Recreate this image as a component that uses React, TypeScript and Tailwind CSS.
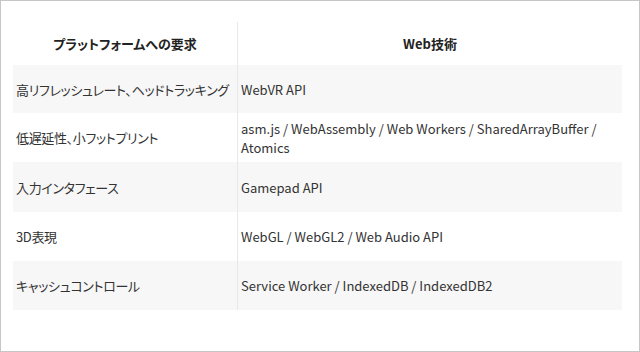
import React from "react";

const rows: { a: string; b: string; shaded: boolean; h: string }[] = [
  { a: "高リフレッシュレート、ヘッドトラッキング", b: "WebVR API", shaded: true, h: "h-[48px]" },
  { a: "低遅延性、小フットプリント", b: "asm.js / WebAssembly / Web Workers / SharedArrayBuffer / Atomics", shaded: false, h: "h-[49px]" },
  { a: "入力インタフェース", b: "Gamepad API", shaded: true, h: "h-[50px]" },
  { a: "3D表現", b: "WebGL / WebGL2 / Web Audio API", shaded: false, h: "h-[49px]" },
  { a: "キャッシュコントロール", b: "Service Worker / IndexedDB / IndexedDB2", shaded: true, h: "h-[49px]" },
];

export default function App() {
  return (
    <div
      className="w-[640px] h-[352px] border border-[#c6c6c6] bg-white text-[#333] text-[13px] leading-[19px]"
      style={{ fontFamily: '"Noto Sans CJK JP", "Noto Sans", sans-serif', fontFeatureSettings: '"palt"' }}
    >
      <div className="ml-[12px] mt-[21px] w-[609px]">
        <div className="grid grid-cols-[225px_1fr] h-[43px] font-bold text-[#222]">
          <div className="flex items-center justify-center border-r border-[#e8e8e8]">プラットフォームへの要求</div>
          <div className="flex items-center justify-center">Web技術</div>
        </div>
        {rows.map((r, i) => (
          <div key={i} className={`grid grid-cols-[225px_1fr] ${r.h} ${r.shaded ? "bg-[#f7f7f7]" : "bg-white"}`}>
            <div className="flex items-center pl-[3px] tracking-[-0.35px] border-r border-[#e8e8e8]">{r.a}</div>
            <div className="flex items-center pl-[3px] pr-[10px]">{r.b}</div>
          </div>
        ))}
      </div>
    </div>
  );
}
